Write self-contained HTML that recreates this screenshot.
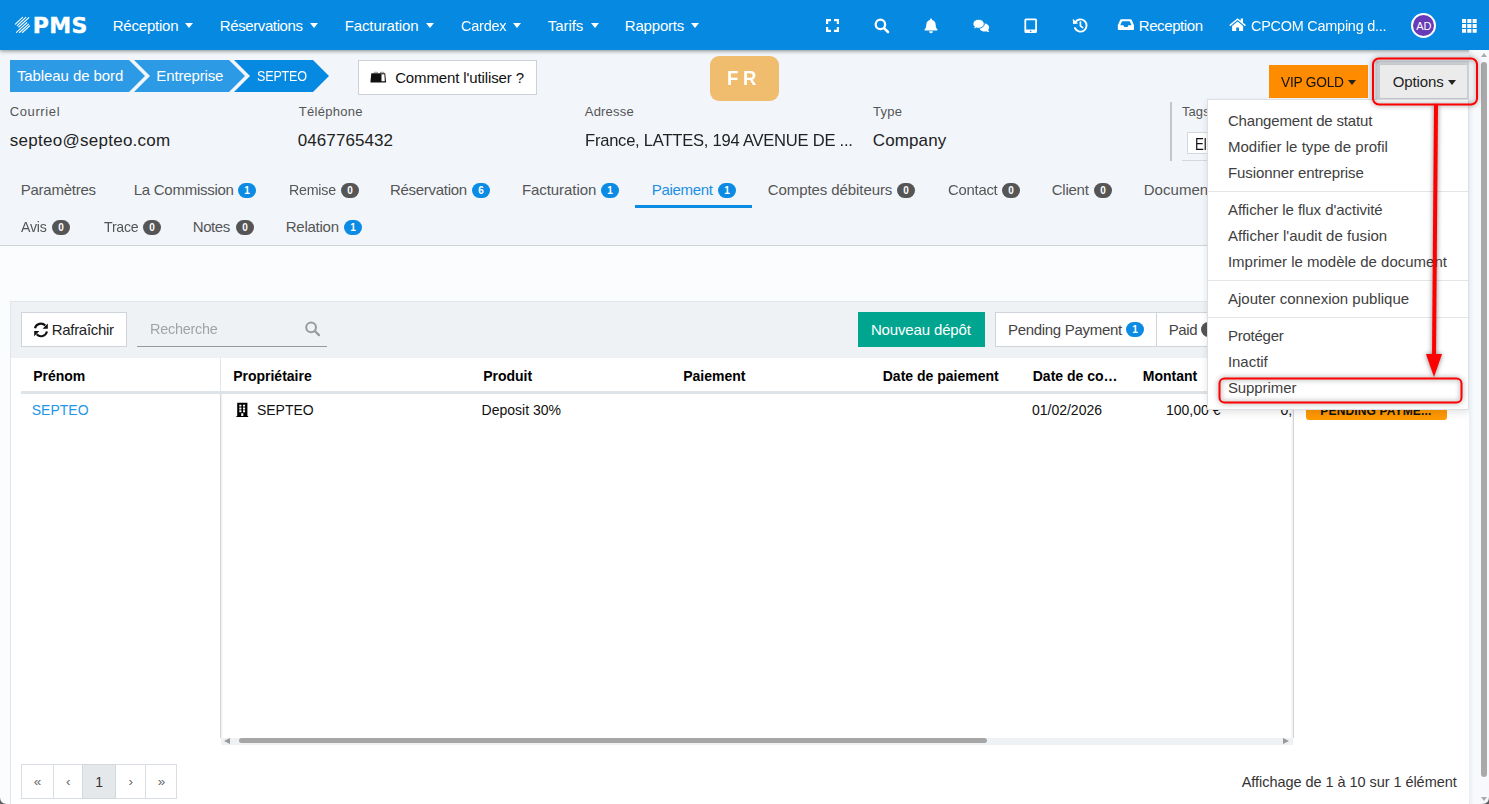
<!DOCTYPE html>
<html lang="fr">
<head>
<meta charset="utf-8">
<title>PMS - SEPTEO</title>
<style>
*{box-sizing:border-box;margin:0;padding:0}
html,body{width:1489px;height:804px;overflow:hidden}
body{background:#f2f6fb;font-family:"Liberation Sans",sans-serif;position:relative}
.a{position:absolute}
.t{position:absolute;white-space:pre;line-height:24px;height:24px}
#nav{left:0;top:0;width:1489px;height:50px;background:#0589e1;box-shadow:0 1px 4px rgba(0,0,0,.45);z-index:5}
.caret{position:absolute;width:0;height:0;border-left:4px solid transparent;border-right:4px solid transparent;border-top:5px solid #fff;top:23px}
.bd{position:absolute;height:15px;width:18px;border-radius:8px;color:#fff;font-size:10px;font-weight:700;line-height:16.5px;text-align:center}
.bb{background:#0b8be3}.bg{background:#555}
.ic{position:absolute;overflow:visible}
.btn{position:absolute;background:#fff;border:1px solid #cfd4da}
.sep{position:absolute;left:1208px;width:260px;height:1px;background:#e3e5e8;z-index:25}
</style>
</head>
<body>
<!-- page backgrounds -->
<div class="a" style="left:0;top:245px;width:1489px;height:1px;background:#cfd2d5"></div>
<div class="a" style="left:0;top:246px;width:1489px;height:558px;background:#fafcfe"></div>

<!-- grid panel -->
<div class="a" style="left:10px;top:301px;width:1461px;height:520px;background:#fff;border:1px solid #e2e6ea"></div>
<div class="a" style="left:11px;top:302px;width:1458px;height:56px;background:#eef2f5"></div>
<div class="a" style="left:21px;top:391px;width:1436px;height:3px;background:#dee3e7"></div>
<div class="a" style="left:220px;top:358px;width:1px;height:33px;background:#e3e6e9"></div>
<div class="a" style="left:220px;top:394px;width:1px;height:344px;background:#d3d6d9;box-shadow:1px 0 2px rgba(0,0,0,.12)"></div>
<div class="a" style="left:1293px;top:358px;width:1px;height:33px;background:#e3e6e9"></div>
<div class="a" style="left:1293px;top:394px;width:1px;height:344px;background:#d3d6d9;box-shadow:-1px 0 2px rgba(0,0,0,.12)"></div>
<!-- h scrollbar -->
<div class="a" style="left:221px;top:738px;width:1072px;height:7px;background:#eef2f5"></div>
<div class="a" style="left:239px;top:738px;width:748px;height:5px;background:#a6a6a6;border-radius:3px"></div>
<div class="a" style="left:224px;top:738px;width:0;height:0;border-top:3px solid transparent;border-bottom:3px solid transparent;border-right:6px solid #999"></div>
<div class="a" style="left:1283px;top:738px;width:0;height:0;border-top:3px solid transparent;border-bottom:3px solid transparent;border-left:6px solid #999"></div>
<!-- toolbar controls -->
<div class="btn" style="left:21px;top:312px;width:106px;height:35px"></div>
<div class="a" style="left:137px;top:346px;width:190px;height:1px;background:#999"></div>
<div class="a" style="left:858px;top:312px;width:127px;height:35px;background:#00a58f"></div>
<div class="btn" style="left:995px;top:312px;width:162px;height:35px"></div>
<div class="btn" style="left:1156px;top:312px;width:90px;height:35px"></div>
<span class="bd bb" style="left:1126px;top:322px">1</span>
<span class="bd bg" style="left:1201px;top:322px">0</span>
<!-- status badge -->
<div class="a" style="left:1306px;top:398px;width:141px;height:22px;background:#ff9800;border-radius:3px"></div>
<!-- pager -->
<div class="a" style="left:21px;top:764px;width:156px;height:35px;background:#fff;border:1px solid #d9dee5"></div>
<div class="a" style="left:82px;top:764px;width:34px;height:35px;background:#e4e8ea;border:1px solid #d4d8db"></div>
<div class="a" style="left:53px;top:764px;width:1px;height:35px;background:#d9dee5"></div>
<div class="a" style="left:145px;top:764px;width:1px;height:35px;background:#d9dee5"></div>
<!-- navbar -->
<div id="nav" class="a"></div>
<!-- breadcrumb -->
<svg class="ic" style="left:0;top:60px;z-index:1" width="340" height="32" viewBox="0 0 340 32">
<polygon points="10,0 129,0 145,16 129,32 10,32" fill="#2d9ae6"/>
<polygon points="134,0 229,0 245,16 229,32 134,32 150,16" fill="#2d9ae6"/>
<polygon points="234,0 313,0 329,16 313,32 234,32 250,16" fill="#0589e1"/>
</svg>
<div class="btn" style="left:358px;top:60px;width:179px;height:35px;border-color:#cdd2d8"></div>
<div class="a" style="left:710px;top:56px;width:69px;height:45px;background:#f0bc6e;border-radius:9px"></div>
<div class="a" style="left:1269px;top:65px;width:99px;height:33px;background:#ff8c00"></div>
<div class="a" style="left:1379px;top:64px;width:89px;height:35px;background:#ebebeb;border:1px solid #c9cdd1;box-shadow:0 0 0 3.5px rgba(130,138,145,.32)"></div>
<div class="caret" style="left:1348px;top:80px;border-top-color:#222"></div>
<div class="caret" style="left:1448px;top:80px;border-top-color:#222"></div>
<!-- info -->
<div class="a" style="left:1170px;top:102px;width:2px;height:59px;background:#c4c6c8"></div>
<div class="a" style="left:1187px;top:132px;width:100px;height:22px;background:#fff;border:1px solid #d5d9dd"></div>
<div class="a" style="left:1182px;top:160px;width:280px;height:1px;background:#d5d9dd"></div>
<!-- tabs -->
<div class="a" style="left:635px;top:205px;width:117px;height:3px;background:#0b8be3"></div>
<span class="bd bb" style="left:238px;top:183px">1</span>
<span class="bd bg" style="left:341px;top:183px">0</span>
<span class="bd bb" style="left:472px;top:183px">6</span>
<span class="bd bb" style="left:601px;top:183px">1</span>
<span class="bd bb" style="left:718px;top:183px">1</span>
<span class="bd bg" style="left:897px;top:183px">0</span>
<span class="bd bg" style="left:1002px;top:183px">0</span>
<span class="bd bg" style="left:1094px;top:183px">0</span>
<span class="bd bg" style="left:52px;top:220px">0</span>
<span class="bd bg" style="left:143px;top:220px">0</span>
<span class="bd bg" style="left:236px;top:220px">0</span>
<span class="bd bb" style="left:344px;top:220px">1</span>
<!-- nav carets -->
<div class="caret" style="left:185px;z-index:6"></div>
<div class="caret" style="left:310px;z-index:6"></div>
<div class="caret" style="left:426px;z-index:6"></div>
<div class="caret" style="left:513px;z-index:6"></div>
<div class="caret" style="left:591px;z-index:6"></div>
<div class="caret" style="left:691px;z-index:6"></div>
<!-- content icons -->
<svg class="ic" style="left:0;top:50px;z-index:9" width="1489" height="400" viewBox="0 50 1489 400">
<!-- book -->
<path d="M371.300 73.200h13.900l.9 9.300h-15.700z" fill="#111"/>
<path d="M381.500 74.200h2.900l.4 7h-3.300z" fill="#fff"/>
<path d="M373.800 72.600c1.300-.5 2.800-.5 4.100 0M380 72.600c1.300-.5 2.800-.5 4.100 0" stroke="#777" stroke-width=".8" fill="none"/>
<!-- refresh -->
<path d="M35 328.300a6.100 6.100 0 0 1 10.300-2.800" fill="none" stroke="#111" stroke-width="2.100"/>
<path d="M47.800 323.500v5.200h-5.200z" fill="#111"/>
<path d="M47 331.500a6.100 6.100 0 0 1-10.300 2.800" fill="none" stroke="#111" stroke-width="2.100"/>
<path d="M34.200 336.300v-5.200h5.200z" fill="#111"/>
<!-- search (grid) -->
<circle cx="311.100" cy="327.300" r="4.900" fill="none" stroke="#9a9a9a" stroke-width="2"/>
<line x1="314.800" y1="331" x2="319" y2="335.100" stroke="#9a9a9a" stroke-width="2.300" stroke-linecap="round"/>
<!-- building -->
<path fill-rule="evenodd" d="M237.200 402.800h10.200v13.300h.8v.9h-11.800v-.9h.8zM239.300 404.700v1.900h2.100v-1.900zM243 404.700v1.900h2.100v-1.900zM239.300 407.500v1.900h2.100v-1.900zM243 407.500v1.900h2.100v-1.900zM239.300 410.300v1.900h2.100v-1.900zM243 410.300v1.900h2.100v-1.900zM241.200 413.200v2.900h2.100v-2.900z" fill="#000"/>
</svg>
<!-- navbar icons -->
<svg class="ic" style="left:0;top:0;z-index:7" width="1489" height="50" viewBox="0 0 1489 50">
<g stroke="#fff" stroke-width="1.1" fill="none" stroke-linecap="round">
<line x1="15.4" y1="24.2" x2="22.6" y2="17.4"/><line x1="17.2" y1="25.6" x2="25.8" y2="17.4"/><line x1="18.8" y1="27" x2="28.8" y2="17.6"/>
<line x1="16.4" y1="32.4" x2="26.8" y2="22.6"/><line x1="19.4" y1="32.5" x2="28.6" y2="24.2"/><line x1="22.4" y1="32.5" x2="29.6" y2="25.8"/>
</g>
<g fill="#fff">
<!-- expand -->
<path d="M826 19h5v2.2h-2.8V24H826zM834 19h5v5h-2.2v-2.8H834zM826 27h2.2v2.8H831V32h-5zM836.8 27H839v5h-5v-2.2h2.8z"/>
<!-- bell -->
<path d="M931 18.4c.6 0 1 .4 1 1v.5c2.300.5 3.700 2.400 3.700 4.800 0 2.500.7 3.500 1.500 4.300.6.600.2 1.600-.6 1.600h-11.200c-.8 0-1.200-1-.6-1.600.8-.8 1.500-1.800 1.500-4.300 0-2.400 1.400-4.300 3.700-4.800v-.5c0-.6.4-1 1-1zM929.100 31.300h3.800a1.900 1.900 0 0 1-3.800 0z"/>
<!-- comments -->
<path d="M984.300 23.600c2.700 0 4.900 1.800 4.900 4 0 1-.4 1.800-1.100 2.500.2.800.7 1.500 1.100 2-.9 0-2-.3-2.800-.9-.6.200-1.300.4-2.100.4-2.700 0-4.900-1.800-4.900-4s2.200-4 4.900-4z"/>
<path d="M978.600 19.300c3.100 0 5.700 2 5.700 4.500s-2.600 4.500-5.700 4.500c-.8 0-1.500-.1-2.200-.4-.9.600-2.100 1-3.400 1 .5-.5 1.100-1.300 1.400-2.200-.9-.8-1.500-1.800-1.500-2.900 0-2.500 2.600-4.500 5.700-4.500z" stroke="#0589e1" stroke-width="1"/>
<!-- tablet -->
<path fill-rule="evenodd" d="M1025.900 18.400h9.600a1.500 1.500 0 0 1 1.500 1.500v11.600a1.500 1.500 0 0 1-1.500 1.500h-9.600a1.500 1.500 0 0 1-1.500-1.500V19.900a1.500 1.500 0 0 1 1.500-1.500zM1026.200 20.200v9.400h9v-9.400zM1030.700 30.400a.8.800 0 1 0 0 1.600.8.800 0 0 0 0-1.600z"/>
<!-- inbox -->
<path fill-rule="evenodd" d="M1121.200 19.300h9.400c.5 0 .9.300 1.100.7l2.300 5.300v3.600a1 1 0 0 1-1 1h-14.200a1 1 0 0 1-1-1v-3.600l2.300-5.300c.2-.4.600-.7 1.100-.7zM1122.100 21.200l-1.800 4.100h3.100l.9 1.700h3.200l.9-1.700h3.100l-1.800-4.100z"/>
<!-- home -->
<path d="M1237.600 18.200l3.100 2.600v-2.400h2.300v4.300l2.900 2.400-.9 1.100-7.400-6.200-7.400 6.200-.9-1.100z"/>
<path d="M1237.600 21.500l5.500 4.600V31h-4.100v-3.600h-2.800V31h-4.100v-4.900z"/>
<!-- grid -->
<path d="M1462 19h4.100v3.900H1462zM1467.300 19h4.100v3.900h-4.100zM1472.600 19h4.100v3.900h-4.100zM1462 24h4.100v3.900H1462zM1467.300 24h4.100v3.900h-4.100zM1472.600 24h4.100v3.900h-4.100zM1462 29h4.100v3.700H1462zM1467.300 29h4.100v3.700h-4.100zM1472.600 29h4.100v3.700h-4.100z"/>
</g>
<!-- search -->
<circle cx="880.400" cy="24.400" r="4.700" fill="none" stroke="#fff" stroke-width="2.300"/>
<line x1="884.300" y1="28.300" x2="888" y2="32" stroke="#fff" stroke-width="2.600" stroke-linecap="round"/>
<!-- history -->
<path d="M1075.200 22.400a6.100 6.100 0 1 1-.3 5.600" fill="none" stroke="#fff" stroke-width="1.900" stroke-linecap="round"/>
<path d="M1072.800 18.700l5.300 4.900-5.100.5z" fill="#fff"/>
<path d="M1080.400 22v3.800l2.300 1.800" fill="none" stroke="#fff" stroke-width="1.700" stroke-linecap="round" stroke-linejoin="round"/>
</svg>
<!-- avatar -->
<div class="a" style="left:1410.8px;top:13px;width:25px;height:25px;border-radius:50%;background:#673ab7;border:2px solid #fff;z-index:6"></div>
<!-- dropdown menu -->
<div class="a" style="left:1207px;top:99px;width:262px;height:310.5px;background:#fff;border:1px solid #dcdfe3;box-shadow:0 3px 7px rgba(0,0,0,.10);z-index:20"></div>
<div class="sep" style="top:191px"></div>
<div class="sep" style="top:280px"></div>
<div class="sep" style="top:317px"></div>
<!-- scrollbar -->
<div class="a" style="left:1469px;top:50px;width:20px;height:754px;background:linear-gradient(90deg,#e9edf2 0,#f7f9fc 5px,#f7f9fc 100%);z-index:40"></div>
<div class="a" style="left:1481px;top:62px;width:6px;height:715px;background:#a9a9a9;border-radius:3px;z-index:41"></div>
<div class="a" style="left:1481px;top:52.5px;width:0;height:0;border-left:3.5px solid transparent;border-right:3.5px solid transparent;border-bottom:4.5px solid #aaa;z-index:41"></div>
<div class="a" style="left:1481px;top:797px;width:0;height:0;border-left:3.5px solid transparent;border-right:3.5px solid transparent;border-top:4.5px solid #aaa;z-index:41"></div>
<!-- annotations -->
<svg class="ic" style="left:0;top:0;z-index:50;filter:drop-shadow(0 .5px 2.5px rgba(0,0,0,.5))" width="1489" height="804" viewBox="0 0 1489 804">
<rect x="1373" y="58.5" width="104" height="46" rx="6" fill="none" stroke="#f00" stroke-width="2"/>
<rect x="1219.5" y="378.5" width="242" height="24" rx="5" fill="none" stroke="#f00" stroke-width="2"/>
<line x1="1436" y1="105" x2="1434" y2="357" stroke="#f00" stroke-width="4"/>
<polygon points="1426,354 1442,354 1434,377" fill="#f00"/>
</svg>
<svg class="ic" style="left:0;top:0;z-index:60" width="1489" height="804" viewBox="0 0 1489 804">
<path d="M0 797Q0 804 7 804H0z" fill="#606060"/>
<path d="M1489 797Q1489 804 1482 804H1489z" fill="#606060"/>
</svg>
<div id="texts" style="position:absolute;left:0;top:0;z-index:10">
<span class="t" style="left:112.75px;top:14.0px;font-size:15px;color:#fff;letter-spacing:-0.22px;">Réception</span>
<span class="t" style="left:219.75px;top:14.0px;font-size:15px;color:#fff;letter-spacing:-0.39px;">Réservations</span>
<span class="t" style="left:344.75px;top:14.0px;font-size:15px;color:#fff;letter-spacing:-0.13px;">Facturation</span>
<span class="t" style="left:460.50px;top:14.0px;font-size:15px;color:#fff;letter-spacing:-0.25px;transform:scaleX(0.968);transform-origin:0 50%;">Cardex</span>
<span class="t" style="left:547.75px;top:14.0px;font-size:15px;color:#fff;letter-spacing:-0.05px;">Tarifs</span>
<span class="t" style="left:624.75px;top:14.0px;font-size:15px;color:#fff;letter-spacing:-0.18px;">Rapports</span>
<span class="t" style="left:1138.75px;top:14.0px;font-size:15px;color:#fff;letter-spacing:-0.41px;">Reception</span>
<span class="t" style="left:1250.50px;top:14.0px;font-size:15px;color:#fff;letter-spacing:-0.25px;transform:scaleX(0.963);transform-origin:0 50%;">CPCOM Camping d...</span>
<span class="t" style="left:1416.35px;top:13.5px;font-size:11px;color:#fff;letter-spacing:-0.25px;">AD</span>
<span class="t" style="left:16.95px;top:64.0px;font-size:15px;color:#fff;letter-spacing:-0.09px;">Tableau de bord</span>
<span class="t" style="left:156.35px;top:64.0px;font-size:15px;color:#fff;letter-spacing:-0.14px;">Entreprise</span>
<span class="t" style="left:257.00px;top:64.0px;font-size:15px;color:#fff;letter-spacing:-0.25px;transform:scaleX(0.840);transform-origin:0 50%;">SEPTEO</span>
<span class="t" style="left:395.15px;top:66.0px;font-size:15px;color:#111;letter-spacing:-0.12px;">Comment l&#x27;utiliser ?</span>
<span class="t" style="left:727.00px;top:66.0px;font-size:19.5px;color:#fff;font-weight:700;letter-spacing:-0.25px;transform:scaleX(0.950);transform-origin:0 50%;">F R</span>
<span class="t" style="left:1281.00px;top:69.5px;font-size:15px;color:#111;letter-spacing:-0.25px;transform:scaleX(0.915);transform-origin:0 50%;">VIP GOLD</span>
<span class="t" style="left:1392.75px;top:69.5px;font-size:15px;color:#222;letter-spacing:-0.13px;">Options</span>
<span class="t" style="left:9.75px;top:100.0px;font-size:13px;color:#555;letter-spacing:0.61px;">Courriel</span>
<span class="t" style="left:9.75px;top:129.0px;font-size:17px;color:#222;letter-spacing:0.27px;">septeo@septeo.com</span>
<span class="t" style="left:298.75px;top:100.0px;font-size:13px;color:#555;letter-spacing:0.28px;">Téléphone</span>
<span class="t" style="left:297.75px;top:129.0px;font-size:17px;color:#222;letter-spacing:0.08px;">0467765432</span>
<span class="t" style="left:584.75px;top:100.0px;font-size:13px;color:#555;letter-spacing:0.21px;">Adresse</span>
<span class="t" style="left:585.00px;top:129.0px;font-size:17px;color:#222;letter-spacing:-0.25px;transform:scaleX(0.975);transform-origin:0 50%;">France, LATTES, 194 AVENUE DE ...</span>
<span class="t" style="left:872.95px;top:100.0px;font-size:13px;color:#555;letter-spacing:0.25px;">Type</span>
<span class="t" style="left:872.75px;top:129.0px;font-size:17px;color:#222;letter-spacing:0.13px;">Company</span>
<span class="t" style="left:1181.95px;top:100.0px;font-size:13px;color:#555;letter-spacing:0.08px;">Tags</span>
<span class="t" style="left:1195.00px;top:131.5px;font-size:16.5px;color:#111;letter-spacing:-0.25px;transform:scaleX(0.808);transform-origin:0 50%;">El</span>
<span class="t" style="left:20.75px;top:178.0px;font-size:15px;color:#555;letter-spacing:-0.25px;">Paramètres</span>
<span class="t" style="left:133.75px;top:178.0px;font-size:15px;color:#555;letter-spacing:-0.27px;">La Commission</span>
<span class="t" style="left:288.50px;top:178.0px;font-size:15px;color:#555;letter-spacing:-0.25px;transform:scaleX(0.950);transform-origin:0 50%;">Remise</span>
<span class="t" style="left:389.95px;top:178.0px;font-size:15px;color:#555;letter-spacing:-0.28px;">Réservation</span>
<span class="t" style="left:521.95px;top:178.0px;font-size:15px;color:#555;letter-spacing:-0.07px;">Facturation</span>
<span class="t" style="left:651.75px;top:178.0px;font-size:15px;color:#1c8fe3;letter-spacing:-0.32px;">Paiement</span>
<span class="t" style="left:767.75px;top:178.0px;font-size:15px;color:#555;letter-spacing:-0.08px;">Comptes débiteurs</span>
<span class="t" style="left:947.50px;top:178.0px;font-size:15px;color:#555;letter-spacing:-0.25px;transform:scaleX(0.991);transform-origin:0 50%;">Contact</span>
<span class="t" style="left:1051.75px;top:178.0px;font-size:15px;color:#555;letter-spacing:-0.25px;">Client</span>
<span class="t" style="left:1143.75px;top:178.0px;font-size:15px;color:#555;letter-spacing:0.03px;">Documents</span>
<span class="t" style="left:21.00px;top:215.0px;font-size:15px;color:#555;letter-spacing:-0.25px;transform:scaleX(0.943);transform-origin:0 50%;">Avis</span>
<span class="t" style="left:103.50px;top:215.0px;font-size:15px;color:#555;letter-spacing:-0.25px;transform:scaleX(0.944);transform-origin:0 50%;">Trace</span>
<span class="t" style="left:192.75px;top:215.0px;font-size:15px;color:#555;letter-spacing:-0.44px;">Notes</span>
<span class="t" style="left:285.75px;top:215.0px;font-size:15px;color:#555;letter-spacing:-0.25px;">Relation</span>
<span class="t" style="left:51.75px;top:317.5px;font-size:15px;color:#222;letter-spacing:-0.31px;">Rafraîchir</span>
<span class="t" style="left:150.00px;top:316.5px;font-size:15px;color:#a3a3a3;letter-spacing:-0.25px;transform:scaleX(0.962);transform-origin:0 50%;">Recherche</span>
<span class="t" style="left:870.95px;top:317.5px;font-size:15px;color:#fff;letter-spacing:-0.15px;">Nouveau dépôt</span>
<span class="t" style="left:1007.95px;top:317.5px;font-size:15px;color:#444;letter-spacing:-0.30px;">Pending Payment</span>
<span class="t" style="left:1168.75px;top:317.5px;font-size:15px;color:#444;letter-spacing:-0.42px;">Paid</span>
<span class="t" style="left:33.15px;top:364.0px;font-size:14px;color:#000;font-weight:700;">Prénom</span>
<span class="t" style="left:233.15px;top:364.0px;font-size:14px;color:#000;font-weight:700;">Propriétaire</span>
<span class="t" style="left:483.15px;top:364.0px;font-size:14px;color:#000;font-weight:700;">Produit</span>
<span class="t" style="left:683.15px;top:364.0px;font-size:14px;color:#000;font-weight:700;">Paiement</span>
<span class="t" style="left:882.75px;top:364.0px;font-size:14px;color:#000;font-weight:700;">Date de paiement</span>
<span class="t" style="left:1032.75px;top:364.0px;font-size:14px;color:#000;font-weight:700;">Date de co…</span>
<span class="t" style="left:1142.75px;top:364.0px;font-size:14px;color:#000;font-weight:700;">Montant</span>
<span class="t" style="left:31.75px;top:397.5px;font-size:14px;color:#2196e8;">SEPTEO</span>
<span class="t" style="left:256.95px;top:397.5px;font-size:14px;color:#111;">SEPTEO</span>
<span class="t" style="left:481.55px;top:397.5px;font-size:14px;color:#111;">Deposit 30%</span>
<span class="t" style="left:1031.95px;top:397.5px;font-size:14px;color:#111;">01/02/2026</span>
<span class="t" style="left:1165.95px;top:397.5px;font-size:14px;color:#111;">100,00 €</span>
<span class="t" style="left:1280.55px;top:397.5px;font-size:14px;color:#111;">0,</span>
<span class="t" style="left:1320.35px;top:398.5px;font-size:12px;color:#111;font-weight:700;letter-spacing:0.15px;">PENDING PAYME...</span>
<span class="t" style="left:33.75px;top:770.0px;font-size:13.5px;color:#666;">«</span>
<span class="t" style="left:65.95px;top:770.0px;font-size:13.5px;color:#666;">‹</span>
<span class="t" style="left:95.35px;top:769.5px;font-size:14px;color:#333;">1</span>
<span class="t" style="left:128.55px;top:770.0px;font-size:13.5px;color:#666;">›</span>
<span class="t" style="left:157.75px;top:770.0px;font-size:13.5px;color:#666;">»</span>
<span class="t" style="left:1241.75px;top:769.5px;font-size:14.5px;color:#333;letter-spacing:-0.05px;">Affichage de 1 à 10 sur 1 élément</span>
<span class="t" style="left:32.75px;top:13.5px;font-size:22px;color:#fff;font-weight:700;letter-spacing:0.38px;font-family:'DejaVu Sans', sans-serif;-webkit-text-stroke:0.4px #fff;">PMS</span>
</div>
<div id="menutexts" style="position:absolute;left:0;top:0;z-index:30">
<span class="t" style="left:1227.95px;top:109.0px;font-size:15px;color:#404040;letter-spacing:-0.17px;">Changement de statut</span>
<span class="t" style="left:1227.95px;top:135.0px;font-size:15px;color:#404040;letter-spacing:0.03px;">Modifier le type de profil</span>
<span class="t" style="left:1227.95px;top:161.0px;font-size:15px;color:#404040;letter-spacing:-0.09px;">Fusionner entreprise</span>
<span class="t" style="left:1227.95px;top:198.0px;font-size:15px;color:#404040;letter-spacing:-0.05px;">Afficher le flux d&#x27;activité</span>
<span class="t" style="left:1227.95px;top:224.0px;font-size:15px;color:#404040;letter-spacing:0.03px;">Afficher l&#x27;audit de fusion</span>
<span class="t" style="left:1227.95px;top:250.0px;font-size:15px;color:#404040;letter-spacing:-0.01px;">Imprimer le modèle de document</span>
<span class="t" style="left:1227.95px;top:287.0px;font-size:15px;color:#404040;letter-spacing:0.01px;">Ajouter connexion publique</span>
<span class="t" style="left:1227.95px;top:324.0px;font-size:15px;color:#404040;letter-spacing:-0.25px;">Protéger</span>
<span class="t" style="left:1227.95px;top:350.0px;font-size:15px;color:#404040;letter-spacing:-0.04px;">Inactif</span>
<span class="t" style="left:1227.95px;top:376.0px;font-size:15px;color:#404040;letter-spacing:-0.09px;">Supprimer</span>
</div>
</body>
</html>
